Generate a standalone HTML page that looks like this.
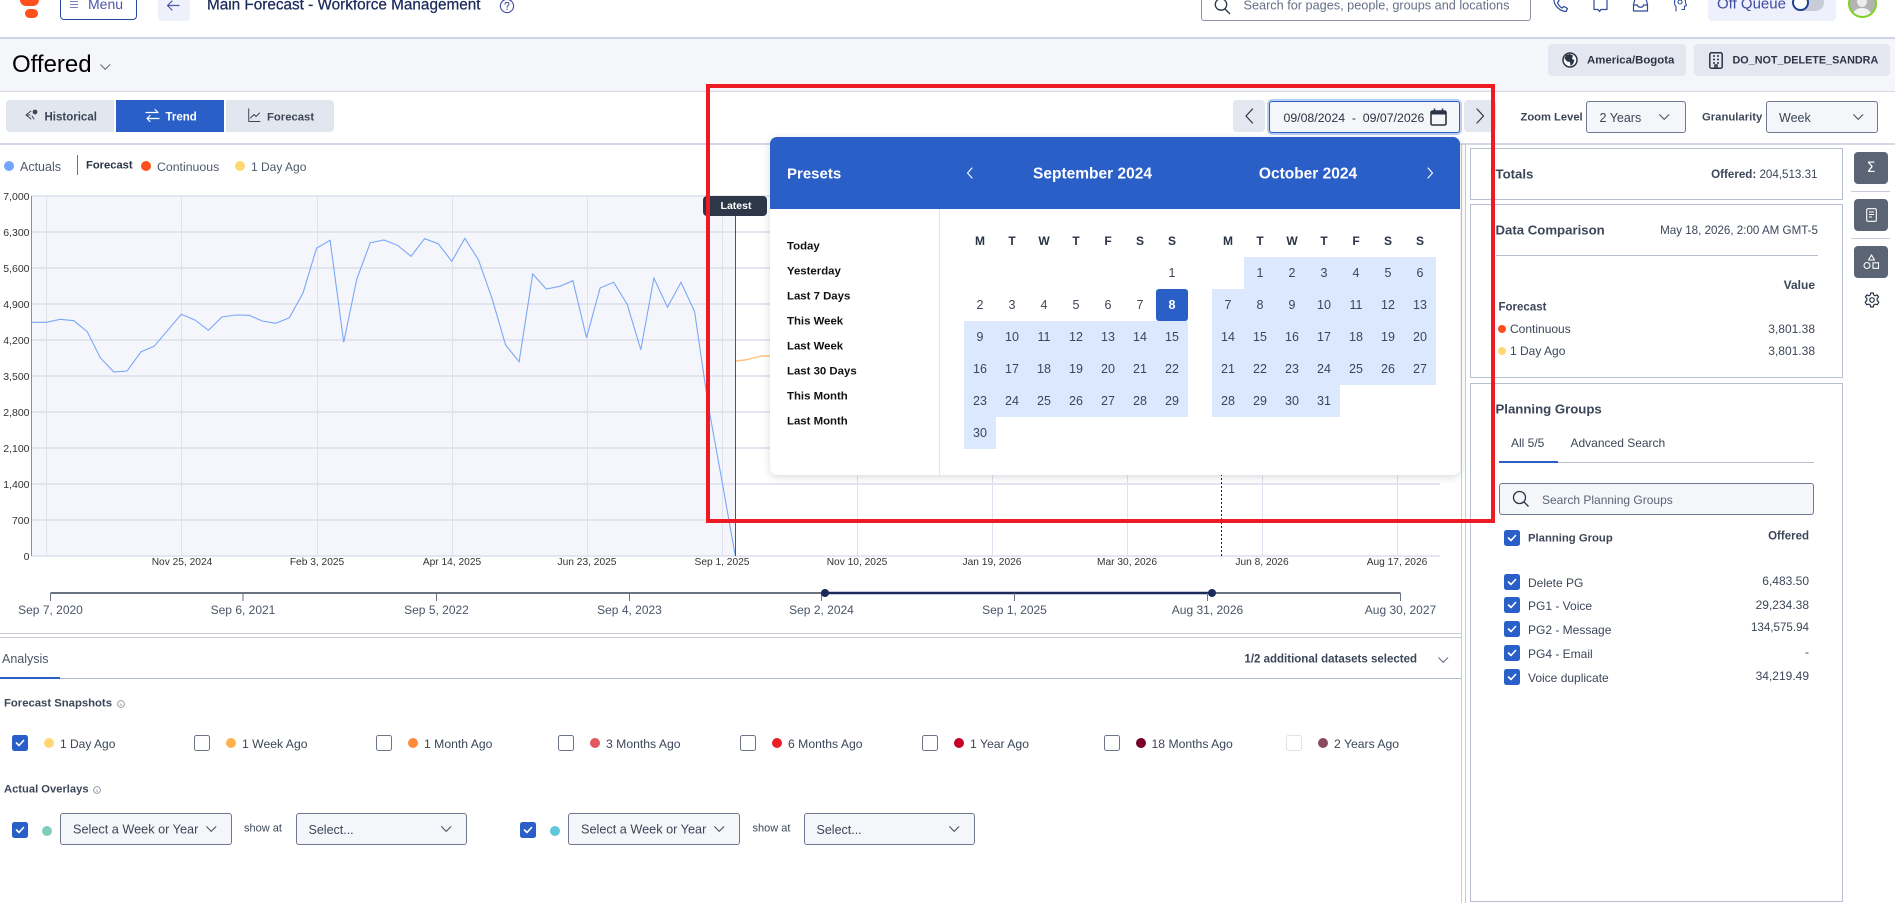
<!DOCTYPE html>
<html lang="en">
<head>
<meta charset="utf-8">
<title>Main Forecast - Workforce Management</title>
<style>
*{box-sizing:border-box}
html,body{margin:0;padding:0;width:1895px;height:903px;overflow:hidden;background:#fff}
body{position:relative;font-family:"Liberation Sans",sans-serif;color:#3c4658}
.t{position:absolute;white-space:nowrap;line-height:1;transform:translateY(-50%);font-size:12px}
.c{transform:translate(-50%,-50%)}
.b{font-weight:bold}
.box{position:absolute}
svg{position:absolute;overflow:visible}
.ic{fill:none;stroke-linecap:round;stroke-linejoin:round}
.sel{position:absolute;background:#f5f6f9;border:1px solid #6f7890;border-radius:3px}
.cb{position:absolute;width:16px;height:16px;border-radius:2.5px;background:#2a5fc8}
.cb svg{left:3px;top:3px}
.ub{position:absolute;width:16px;height:16px;border-radius:2.5px;background:#fff;border:1.5px solid #6b7488}
.dot{position:absolute;width:10px;height:10px;border-radius:50%}
.grid{position:absolute;display:grid;grid-template-columns:repeat(7,32px);grid-auto-rows:32px;font-size:12.5px;color:#3c4658}
.grid div{display:flex;align-items:center;justify-content:center}
.grid .w{font-weight:bold;color:#2b3445;font-size:12px}
.grid .h{background:#dce8fd}
.grid .s{background:#2a5fc8;color:#fff;font-weight:bold;border-radius:3px}
.pre{position:absolute;left:787px;font-weight:bold;font-size:11.4px;line-height:1;color:#111;transform:translateY(-50%);white-space:nowrap}
.x{font-size:10.2px;color:#333}
.y{font-size:10.5px;color:#333}
.tl{font-size:12px;color:#4a5568}
</style>
</head>
<body>

<!-- top header -->
<div class="box" style="left:0;top:37px;width:1895px;height:1.5px;background:#cdd2e6"></div>
<div class="box" style="left:20px;top:-6px;width:19px;height:12px;border-radius:6px;background:#ff4f1f"></div>
<div class="box" style="left:25px;top:9px;width:13px;height:9px;border-radius:4.5px;background:#ff4f1f"></div>

<div class="box" style="left:60px;top:-12px;width:77px;height:32px;border:1px solid #2a4a9f;border-radius:4px;background:#fff"></div>
<svg style="left:70px;top:0" width="10" height="10"><path d="M0 1.5H8M0 4.5H8M0 7.5H8" stroke="#7a82b8" stroke-width="1"/></svg>
<div class="t" style="left:88px;top:4px;font-size:14px;color:#4d57a8">Menu</div>
<div class="box" style="left:158px;top:-12px;width:32px;height:33px;border-radius:4px;background:#eef0fb"></div>
<svg style="left:166px;top:0" width="14" height="12"><path class="ic" d="M13 5.5H1.5M6 1L1.5 5.5L6 10" stroke="#4d57a8" stroke-width="1.2"/></svg>
<div class="t" style="left:207px;top:5px;font-size:15.3px;color:#1b2a5b;-webkit-text-stroke:.25px #1b2a5b">Main Forecast - Workforce Management</div>
<svg style="left:499px;top:-2px" width="16" height="16"><circle cx="8" cy="8" r="6.6" fill="none" stroke="#3f4ca0" stroke-width="1.1"/><path class="ic" d="M6 6.2C6 3.8 10 3.8 10 6.2C10 7.6 8 7.6 8 9.3" stroke="#3f4ca0" stroke-width="1"/><circle cx="8" cy="11.3" r=".7" fill="#3f4ca0"/></svg>

<div class="box" style="left:1201px;top:-12px;width:330px;height:33px;border:1px solid #8d93a8;border-radius:3px;background:#fff"></div>
<svg style="left:1214px;top:-2px" width="18" height="18"><circle cx="7" cy="6.5" r="5.7" fill="none" stroke="#2b3445" stroke-width="1.3"/><path d="M11 11L16 16" stroke="#2b3445" stroke-width="1.3"/></svg>
<div class="t" style="left:1243.5px;top:6px;font-size:12.7px;color:#667086">Search for pages, people, groups and locations</div>

<svg style="left:1552px;top:-4px" width="17" height="17"><path class="ic" d="M2 4C2 9 7 15 14 15.5L15.5 12.5L12 10.5L10 12C8 11 6 8.5 5.5 6.5L7 5L5 1Z" stroke="#2f4a9c" stroke-width="1.2"/></svg>
<svg style="left:1592px;top:-4px" width="17" height="17"><path class="ic" d="M2 1V13.5H6L7.5 15.5L9 13.5H15V1" stroke="#2f4a9c" stroke-width="1.2"/></svg>
<svg style="left:1632px;top:-4px" width="17" height="17"><path class="ic" d="M3.5 1L1.5 8.5V15H15.5V8.5L13.5 1M1.5 9H5.5C6 12 11 12 11.5 9H15.5" stroke="#2f4a9c" stroke-width="1.2"/></svg>
<svg style="left:1672px;top:-4px" width="17" height="17"><circle cx="8" cy="6" r="2" fill="none" stroke="#2f4a9c" stroke-width="1.1"/><path class="ic" d="M2.5 6C2.5 0 13.5 0 13.5 6C13.5 8 15 9 14 10H12.5V13.5H10M4 15V10.5C3 9.5 2.5 8 2.5 6" stroke="#2f4a9c" stroke-width="1.1"/></svg>

<div class="box" style="left:1708px;top:-12px;width:128px;height:33px;border-radius:4px;background:#eef0fb"></div>
<div class="t" style="left:1717px;top:4px;font-size:15px;color:#3f4ca0">Off Queue</div>
<div class="box" style="left:1792px;top:-6px;width:32px;height:17px;border-radius:8.5px;background:#c8ccd6"></div>
<div class="box" style="left:1792px;top:-6px;width:16.5px;height:17px;border-radius:50%;background:#fff;border:2.5px solid #1f3f94"></div>
<div class="box" style="left:1848px;top:-11px;width:29px;height:29px;border-radius:50%;border:2.5px solid #7ed321;background:#b3b3b3;overflow:hidden">
  <div class="box" style="left:3px;top:17px;width:18px;height:14px;border-radius:50%;background:#f3f3f3"></div>
  <div class="box" style="left:7px;top:5px;width:10px;height:11px;border-radius:50%;background:#ececec"></div>
</div>

<!-- offered bar -->
<div class="box" style="left:0;top:38.5px;width:1895px;height:53px;background:#f5f6f9;border-bottom:1.5px solid #d5d8e4"></div>
<div class="t" style="left:12px;top:65px;font-size:24px;color:#000">Offered</div>
<svg style="left:100px;top:64px" width="11" height="7"><path class="ic" d="M.7 .7L5.2 5.4L9.8 .7" stroke="#5a6475" stroke-width="1"/></svg>

<div class="box" style="left:1548px;top:44px;width:138px;height:32px;border-radius:4px;background:#e4e7f0"></div>
<svg style="left:1562px;top:52px" width="16" height="16"><circle cx="8" cy="8" r="7" fill="#fff" stroke="#2b3445" stroke-width="1.5"/><path d="M4 3L8 2L11 3.5L10 7L12.5 8L11 12L8.5 14L8 10L5 9.5L2.5 6.5Z" fill="#2b3445"/></svg>
<div class="t b" style="left:1587px;top:60.5px;color:#2b3445;font-size:11.4px">America/Bogota</div>
<div class="box" style="left:1694px;top:44px;width:196px;height:32px;border-radius:4px;background:#e4e7f0"></div>
<svg style="left:1709px;top:52px" width="14" height="17"><rect x=".8" y=".8" width="12.4" height="15.4" rx="1.5" fill="none" stroke="#2b3445" stroke-width="1.5"/><path d="M4 4H6M8 4H10M4 7.5H6M8 7.5H10M4 11H6M8 11H10M6 16V13H8V16" stroke="#2b3445" stroke-width="1.5" fill="none"/></svg>
<div class="t b" style="left:1732.5px;top:60.5px;color:#2b3445;font-size:10.8px">DO_NOT_DELETE_SANDRA</div>

<!-- tab row -->
<div class="box" style="left:6px;top:100px;width:108px;height:32px;background:#e2e6ee;border-radius:4px 0 0 4px"></div>
<div class="box" style="left:116px;top:100px;width:108px;height:32px;background:#2a5fc8"></div>
<div class="box" style="left:226px;top:100px;width:108px;height:32px;background:#e2e6ee;border-radius:0 4px 4px 0"></div>
<svg style="left:25px;top:108px" width="14" height="14"><path class="ic" d="M6 3L1 7L6 11M1 7H5M9 11L7 8" stroke="#3c4658" stroke-width="1"/><circle cx="10" cy="4" r="2.4" fill="#3c4658"/></svg>
<div class="t b" style="left:44.5px;top:117.5px;color:#3c4658;font-size:11.5px">Historical</div>
<svg style="left:145px;top:108px" width="15" height="15"><path class="ic" d="M1 4.5H13M10 1.5L13 4.5M14 10.5H2M5 7.5L2 10.5L5 13.5" stroke="#fff" stroke-width="1.2"/></svg>
<div class="t b" style="left:165.5px;top:117.5px;color:#fff;font-size:11.5px">Trend</div>
<svg style="left:248px;top:108px" width="13" height="15"><path class="ic" d="M.7 .7V13.5H12M2.5 10L6 6.5L8 8.5L11.5 5" stroke="#3c4658" stroke-width="1"/></svg>
<div class="t b" style="left:267px;top:117.5px;color:#3c4658;font-size:11.3px">Forecast</div>
<div class="box" style="left:0;top:143px;width:1895px;height:1.5px;background:#d5d8e4"></div>

<!-- legend -->
<div class="dot" style="left:4px;top:161px;background:#72a5fb"></div>
<div class="t" style="left:20px;top:167px;font-size:12.5px;color:#4f5a6c">Actuals</div>
<div class="box" style="left:77px;top:155px;width:1px;height:20px;background:#6b7488"></div>
<div class="t b" style="left:86px;top:166px;color:#2b3445;font-size:11.2px">Forecast</div>
<div class="dot" style="left:141px;top:161px;background:#ff4f1f"></div>
<div class="t" style="left:157px;top:167px;font-size:12.3px;color:#4f5a6c">Continuous</div>
<div class="dot" style="left:235px;top:161px;background:#ffd873"></div>
<div class="t" style="left:251px;top:167px;font-size:12px;color:#4f5a6c">1 Day Ago</div>

<!-- chart -->
<svg style="left:0;top:0" width="1895" height="903">
  <rect x="31.5" y="196" width="704" height="360" fill="#f5f6fb"/>
  <g stroke="#dcdfea" stroke-width="1.4" fill="none">
    <path d="M31 196H1440M31 232H1440M31 268H1440M31 304H1440M31 340H1440M31 376H1440M31 412H1440M31 448H1440M31 484H1440M31 520H1440M31 556H1440"/>
  </g>
  <g stroke="#dfe2ee" stroke-width="1" fill="none">
    <path d="M46.5 196V556M181.5 196V556M317.5 196V556M452.5 196V556M587.5 196V556M722.5 196V556M857.5 196V556M992.5 196V556M1127.5 196V556M1262.5 196V556M1397.5 196V556"/>
  </g>
  <path d="M31.5 196V556" stroke="#8a8f9c" stroke-width="1"/>
  <path d="M1221.5 470V556" stroke="#222" stroke-width="1" stroke-dasharray="2 2"/>
  <polyline fill="none" stroke="#7aa7f7" stroke-width="1.1" points="31.5,322.3 46.5,322.3 60.1,319.3 73.7,320.7 87.3,331.7 100.3,357.7 113.9,372 127,371 141.1,351.7 154.1,346.3 167.7,330.3 181.3,314.3 194.9,320 208.4,330.3 222,317 235.6,315 249.2,315.3 262.2,321 275.8,323.3 289.4,317.7 303,293 316.5,248.3 330.1,240.3 343.7,342.3 356.8,279 370.3,242.7 383.9,240 397.5,245.3 411,256.3 424.6,238.7 438.2,243.7 451.8,261.3 464.9,238.3 478.4,259.7 492,298.3 505.6,345 519.1,361.7 532.7,274 546.3,289 559.9,286.3 572.9,280.7 586.5,337.7 600.1,288 613.7,282.3 627.2,304.3 640.8,349.7 653.9,278 667.5,307.3 681,282.3 694.6,311.7 708.2,405 721.8,480 735.3,556"/>
  <polyline fill="none" stroke="#ffc27a" stroke-width="1.4" points="735.5,361 745,360 755,357.5 762,356 772,356"/>
  <path d="M735.5 200V556" stroke="#4b5563" stroke-width="1"/>
  <!-- timeline -->
  <path d="M50.5 593H1400.5" stroke="#6b7280" stroke-width="2"/>
  <path d="M825 593H1212" stroke="#1b2a5b" stroke-width="2.4"/>
  <path d="M50.5 593V601M243 593V601M436.5 593V601M629.5 593V601M821.5 593V601M1014.5 593V601M1207.5 593V601M1400.5 593V601" stroke="#6b7280" stroke-width="1"/>
  <circle cx="825" cy="593" r="4" fill="#1b2a5b"/>
  <circle cx="1212" cy="593" r="4" fill="#1b2a5b"/>
</svg>

<div class="t y" style="right:1865.5px;top:196.5px">7,000</div>
<div class="t y" style="right:1865.5px;top:232.5px">6,300</div>
<div class="t y" style="right:1865.5px;top:268.5px">5,600</div>
<div class="t y" style="right:1865.5px;top:304.5px">4,900</div>
<div class="t y" style="right:1865.5px;top:340.5px">4,200</div>
<div class="t y" style="right:1865.5px;top:376.5px">3,500</div>
<div class="t y" style="right:1865.5px;top:412.5px">2,800</div>
<div class="t y" style="right:1865.5px;top:448.5px">2,100</div>
<div class="t y" style="right:1865.5px;top:484.5px">1,400</div>
<div class="t y" style="right:1865.5px;top:520.5px">700</div>
<div class="t y" style="right:1865.5px;top:556.5px">0</div>

<div class="t c x" style="left:182px;top:563px">Nov 25, 2024</div>
<div class="t c x" style="left:317px;top:563px">Feb 3, 2025</div>
<div class="t c x" style="left:452px;top:563px">Apr 14, 2025</div>
<div class="t c x" style="left:587px;top:563px">Jun 23, 2025</div>
<div class="t c x" style="left:722px;top:563px">Sep 1, 2025</div>
<div class="t c x" style="left:857px;top:563px">Nov 10, 2025</div>
<div class="t c x" style="left:992px;top:563px">Jan 19, 2026</div>
<div class="t c x" style="left:1127px;top:563px">Mar 30, 2026</div>
<div class="t c x" style="left:1262px;top:563px">Jun 8, 2026</div>
<div class="t c x" style="left:1397px;top:563px">Aug 17, 2026</div>

<div class="t c tl" style="left:50.5px;top:610px">Sep 7, 2020</div>
<div class="t c tl" style="left:243px;top:610px">Sep 6, 2021</div>
<div class="t c tl" style="left:436.5px;top:610px">Sep 5, 2022</div>
<div class="t c tl" style="left:629.5px;top:610px">Sep 4, 2023</div>
<div class="t c tl" style="left:821.5px;top:610px">Sep 2, 2024</div>
<div class="t c tl" style="left:1014.5px;top:610px">Sep 1, 2025</div>
<div class="t c tl" style="left:1207.5px;top:610px">Aug 31, 2026</div>
<div class="t c tl" style="left:1400.5px;top:610px">Aug 30, 2027</div>

<!-- latest tag -->
<div class="box" style="left:703px;top:196px;width:64px;height:20px;background:#2e3748;border-radius:4px"></div>
<div class="t c b" style="left:736px;top:205.5px;color:#fff;font-size:10.5px">Latest</div>

<!-- analysis -->
<div class="box" style="left:0;top:633px;width:1461px;height:1px;background:#c8ccd8"></div>
<div class="box" style="left:0;top:637px;width:1461px;height:1px;background:#c8ccd8"></div>
<div class="t" style="left:2px;top:659px;font-size:12.5px;color:#4a5568">Analysis</div>
<div class="box" style="left:0;top:678px;width:1461px;height:1px;background:#b0b8d0"></div>
<div class="box" style="left:0;top:677px;width:60px;height:2px;background:#2a5fc8"></div>
<div class="t b" style="right:478px;top:660px;color:#3c4658;font-size:11.5px">1/2 additional datasets selected</div>
<svg style="left:1438px;top:657px" width="11" height="7"><path class="ic" d="M.7 .7L5.2 5.4L9.8 .7" stroke="#5a6475" stroke-width="1"/></svg>

<div class="t b" style="left:4px;top:704px;color:#3c4658;font-size:11.3px">Forecast Snapshots</div>
<svg style="left:117px;top:700px" width="8" height="8"><circle cx="4" cy="4" r="3.4" fill="none" stroke="#7a8394" stroke-width=".8"/><path d="M4 3.5V6" stroke="#7a8394" stroke-width=".8"/></svg>

<div class="cb" style="left:12px;top:735px"><svg width="10" height="10"><path class="ic" d="M1.5 5L4 7.5L8.5 2.5" stroke="#fff" stroke-width="1.6"/></svg></div>
<div class="dot" style="left:44px;top:738px;background:#ffd873"></div>
<div class="t" style="left:60px;top:744px;font-size:12px">1 Day Ago</div>
<div class="ub" style="left:194px;top:735px"></div>
<div class="dot" style="left:225.5px;top:738px;background:#ffb14e"></div>
<div class="t" style="left:242px;top:744px;font-size:12.2px">1 Week Ago</div>
<div class="ub" style="left:376px;top:735px"></div>
<div class="dot" style="left:408px;top:738px;background:#ff8a3c"></div>
<div class="t" style="left:424px;top:744px;font-size:12.2px">1 Month Ago</div>
<div class="ub" style="left:558px;top:735px"></div>
<div class="dot" style="left:590px;top:738px;background:#e0595f"></div>
<div class="t" style="left:606px;top:744px;font-size:12.2px">3 Months Ago</div>
<div class="ub" style="left:740px;top:735px"></div>
<div class="dot" style="left:772px;top:738px;background:#ea1f25"></div>
<div class="t" style="left:788px;top:744px;font-size:12.2px">6 Months Ago</div>
<div class="ub" style="left:922px;top:735px"></div>
<div class="dot" style="left:954px;top:738px;background:#c70025"></div>
<div class="t" style="left:970px;top:744px;font-size:12.2px">1 Year Ago</div>
<div class="ub" style="left:1104px;top:735px"></div>
<div class="dot" style="left:1135.5px;top:738px;background:#7a0026"></div>
<div class="t" style="left:1151.5px;top:744px;font-size:12.2px">18 Months Ago</div>
<div class="ub" style="left:1286px;top:735px;border-color:#dfe2e8"></div>
<div class="dot" style="left:1318px;top:738px;background:#8a4a60"></div>
<div class="t" style="left:1334px;top:744px;font-size:12.2px">2 Years Ago</div>

<div class="t b" style="left:4px;top:789.5px;color:#3c4658;font-size:11.2px">Actual Overlays</div>
<svg style="left:93px;top:786px" width="8" height="8"><circle cx="4" cy="4" r="3.4" fill="none" stroke="#7a8394" stroke-width=".8"/><path d="M4 3.5V6" stroke="#7a8394" stroke-width=".8"/></svg>

<div class="cb" style="left:12px;top:822px"><svg width="10" height="10"><path class="ic" d="M1.5 5L4 7.5L8.5 2.5" stroke="#fff" stroke-width="1.6"/></svg></div>
<div class="dot" style="left:42px;top:826px;background:#7fcdbb"></div>
<div class="sel" style="left:60px;top:813px;width:172px;height:32px"></div>
<div class="t" style="left:73px;top:829.5px;font-size:12.7px">Select a Week or Year</div>
<svg style="left:206px;top:826px" width="11" height="7"><path class="ic" d="M.7 .7L5.2 5.4L9.8 .7" stroke="#4a5568" stroke-width="1.1"/></svg>
<div class="t" style="left:244px;top:829px;font-size:11px">show at</div>
<div class="sel" style="left:295.5px;top:813px;width:171px;height:32px"></div>
<div class="t" style="left:308.5px;top:829.5px;font-size:12.5px">Select...</div>
<svg style="left:441px;top:826px" width="11" height="7"><path class="ic" d="M.7 .7L5.2 5.4L9.8 .7" stroke="#4a5568" stroke-width="1.1"/></svg>

<div class="cb" style="left:520px;top:822px"><svg width="10" height="10"><path class="ic" d="M1.5 5L4 7.5L8.5 2.5" stroke="#fff" stroke-width="1.6"/></svg></div>
<div class="dot" style="left:550px;top:826px;background:#5fc8d8"></div>
<div class="sel" style="left:568px;top:813px;width:172px;height:32px"></div>
<div class="t" style="left:581px;top:829.5px;font-size:12.7px">Select a Week or Year</div>
<svg style="left:714px;top:826px" width="11" height="7"><path class="ic" d="M.7 .7L5.2 5.4L9.8 .7" stroke="#4a5568" stroke-width="1.1"/></svg>
<div class="t" style="left:752.5px;top:829px;font-size:11px">show at</div>
<div class="sel" style="left:803.5px;top:813px;width:171px;height:32px"></div>
<div class="t" style="left:816.5px;top:829.5px;font-size:12.5px">Select...</div>
<svg style="left:949px;top:826px" width="11" height="7"><path class="ic" d="M.7 .7L5.2 5.4L9.8 .7" stroke="#4a5568" stroke-width="1.1"/></svg>

<!-- date controls -->
<div class="box" style="left:1233px;top:100px;width:32px;height:32px;background:#e4e7f0;border-radius:4px"></div>
<svg style="left:1245px;top:108px" width="9" height="16"><path class="ic" d="M7.5 1L1 8L7.5 15" stroke="#2b3445" stroke-width="1.2"/></svg>
<div class="box" style="left:1269px;top:101px;width:191px;height:32px;background:#f5f6f9;border:1px solid #2a5fc8;border-radius:3px;box-shadow:0 0 0 2px #bcd0f5"></div>
<div class="t" style="left:1283.5px;top:117.5px;font-size:12.3px;color:#2b3445">09/08/2024&nbsp; - &nbsp;09/07/2026</div>
<svg style="left:1430px;top:108px" width="17" height="18"><rect x="1" y="3" width="15" height="14" rx="1.5" fill="none" stroke="#2b3445" stroke-width="1.6"/><path d="M1 6.5H16V3H1Z" fill="#2b3445"/><path d="M4.5 .5V3M12.5 .5V3" stroke="#2b3445" stroke-width="1.6"/></svg>
<div class="box" style="left:1464px;top:100px;width:32px;height:32px;background:#e4e7f0;border-radius:4px"></div>
<svg style="left:1476px;top:108px" width="9" height="16"><path class="ic" d="M1 1L7.5 8L1 15" stroke="#2b3445" stroke-width="1.2"/></svg>

<div class="t b" style="left:1520.5px;top:117.5px;color:#3c4658;font-size:11.2px">Zoom Level</div>
<div class="sel" style="left:1586px;top:101px;width:100px;height:32px"></div>
<div class="t" style="left:1599.5px;top:117.5px;font-size:12.5px">2 Years</div>
<svg style="left:1659px;top:114px" width="11" height="7"><path class="ic" d="M.7 .7L5.2 5.4L9.8 .7" stroke="#4a5568" stroke-width="1.1"/></svg>
<div class="t b" style="left:1702px;top:117.5px;color:#3c4658;font-size:11.3px">Granularity</div>
<div class="sel" style="left:1766px;top:101px;width:112px;height:32px"></div>
<div class="t" style="left:1779px;top:117.5px;font-size:12.5px">Week</div>
<svg style="left:1853px;top:114px" width="11" height="7"><path class="ic" d="M.7 .7L5.2 5.4L9.8 .7" stroke="#4a5568" stroke-width="1.1"/></svg>

<!-- right panel -->
<div class="box" style="left:1461px;top:144px;width:1px;height:759px;background:#c8ccd8"></div>
<div class="box" style="left:1465px;top:144px;width:1px;height:759px;background:#c8ccd8"></div>

<div class="box" style="left:1470px;top:148px;width:373px;height:52px;border:1px solid #b8bfd0"></div>
<div class="t b" style="left:1495.5px;top:174px;font-size:13.2px;color:#3c4658">Totals</div>
<div class="t" style="right:77.5px;top:174.5px;font-size:11.6px;color:#3c4658"><b>Offered:</b> 204,513.31</div>

<div class="box" style="left:1470px;top:204px;width:373px;height:174px;border:1px solid #b8bfd0"></div>
<div class="t b" style="left:1495.5px;top:230px;font-size:13.2px;color:#3c4658">Data Comparison</div>
<div class="t" style="right:77px;top:230.5px;font-size:11.6px">May 18, 2026, 2:00 AM GMT-5</div>
<div class="box" style="left:1495.5px;top:255px;width:322.5px;height:1px;background:#b8bfd0"></div>
<div class="t b" style="right:80px;top:284.5px;color:#3c4658">Value</div>
<div class="t b" style="left:1498.5px;top:307.5px;color:#3c4658;font-size:11.5px">Forecast</div>
<div class="box" style="left:1498px;top:325px;width:8px;height:8px;border-radius:50%;background:#ff4f1f"></div>
<div class="t" style="left:1510px;top:328.5px;font-size:12px">Continuous</div>
<div class="t" style="right:80px;top:328.5px;font-size:12px">3,801.38</div>
<div class="box" style="left:1498px;top:347px;width:8px;height:8px;border-radius:50%;background:#ffd873"></div>
<div class="t" style="left:1510px;top:350.5px;font-size:12px">1 Day Ago</div>
<div class="t" style="right:80px;top:350.5px;font-size:12px">3,801.38</div>

<div class="box" style="left:1470px;top:383px;width:373px;height:519px;border:1px solid #b8bfd0"></div>
<div class="t b" style="left:1495.5px;top:409px;font-size:13.2px;color:#3c4658">Planning Groups</div>
<div class="t" style="left:1511px;top:443px;font-size:12px">All 5/5</div>
<div class="t" style="left:1570.5px;top:443px;font-size:12px">Advanced Search</div>
<div class="box" style="left:1499px;top:462px;width:315px;height:1px;background:#b8bfd0"></div>
<div class="box" style="left:1499px;top:461px;width:59px;height:2px;background:#2a5fc8"></div>
<div class="sel" style="left:1499px;top:483px;width:315px;height:32px"></div>
<svg style="left:1512px;top:490px" width="18" height="18"><circle cx="7.5" cy="7.5" r="6" fill="none" stroke="#2b3445" stroke-width="1.3"/><path d="M12 12L16.5 16.5" stroke="#2b3445" stroke-width="1.3"/></svg>
<div class="t" style="left:1542px;top:499.5px;font-size:12px;color:#5a6475">Search Planning Groups</div>

<div class="cb" style="left:1504px;top:530px"><svg width="10" height="10"><path class="ic" d="M1.5 5L4 7.5L8.5 2.5" stroke="#fff" stroke-width="1.6"/></svg></div>
<div class="t b" style="left:1528px;top:538.5px;color:#3c4658;font-size:11.3px">Planning Group</div>
<div class="t b" style="right:86px;top:536.5px;color:#3c4658;font-size:11.5px">Offered</div>

<div class="cb" style="left:1504px;top:574px"><svg width="10" height="10"><path class="ic" d="M1.5 5L4 7.5L8.5 2.5" stroke="#fff" stroke-width="1.6"/></svg></div>
<div class="t" style="left:1528px;top:582.5px;font-size:12px">Delete PG</div>
<div class="t" style="right:86px;top:580.5px;font-size:12px">6,483.50</div>
<div class="cb" style="left:1504px;top:597px"><svg width="10" height="10"><path class="ic" d="M1.5 5L4 7.5L8.5 2.5" stroke="#fff" stroke-width="1.6"/></svg></div>
<div class="t" style="left:1528px;top:605.5px;font-size:12px">PG1 - Voice</div>
<div class="t" style="right:86px;top:604.5px;font-size:12px">29,234.38</div>
<div class="cb" style="left:1504px;top:621px"><svg width="10" height="10"><path class="ic" d="M1.5 5L4 7.5L8.5 2.5" stroke="#fff" stroke-width="1.6"/></svg></div>
<div class="t" style="left:1528px;top:629.5px;font-size:12px">PG2 - Message</div>
<div class="t" style="right:86px;top:627.5px;font-size:11.6px">134,575.94</div>
<div class="cb" style="left:1504px;top:645px"><svg width="10" height="10"><path class="ic" d="M1.5 5L4 7.5L8.5 2.5" stroke="#fff" stroke-width="1.6"/></svg></div>
<div class="t" style="left:1528px;top:653.5px;font-size:12px">PG4 - Email</div>
<div class="t" style="right:86px;top:652px;font-size:12px">-</div>
<div class="cb" style="left:1504px;top:669px"><svg width="10" height="10"><path class="ic" d="M1.5 5L4 7.5L8.5 2.5" stroke="#fff" stroke-width="1.6"/></svg></div>
<div class="t" style="left:1528px;top:677.5px;font-size:12px">Voice duplicate</div>
<div class="t" style="right:86px;top:675.5px;font-size:12px">34,219.49</div>

<!-- side toolbar -->
<div class="box" style="left:1854px;top:152px;width:34px;height:32px;background:#5b6474;border-radius:4px"></div>
<div class="t c" style="left:1871px;top:168px;color:#fff;font-size:14px;font-family:'DejaVu Sans',sans-serif">Σ</div>
<div class="box" style="left:1851px;top:191px;width:39px;height:1px;background:#c8ccd8"></div>
<div class="box" style="left:1854px;top:199px;width:34px;height:32px;background:#5b6474;border-radius:4px"></div>
<svg style="left:1865.5px;top:208px" width="11" height="14"><rect x=".7" y=".7" width="9.6" height="12.6" rx="1.2" fill="none" stroke="#fff" stroke-width="1.1"/><path d="M3 4H8M3 6.5H8M3 9H6" stroke="#fff" stroke-width="1"/></svg>
<div class="box" style="left:1851px;top:238px;width:39px;height:1px;background:#c8ccd8"></div>
<div class="box" style="left:1854px;top:246px;width:34px;height:32px;background:#5b6474;border-radius:4px"></div>
<svg style="left:1863px;top:254px" width="17" height="16"><path class="ic" d="M8.5 1L11.5 6H5.5Z" fill="none" stroke="#fff" stroke-width="1.1"/><circle cx="4" cy="11.5" r="3" fill="none" stroke="#fff" stroke-width="1.1"/><rect x="10" y="8.8" width="5.5" height="5.5" fill="none" stroke="#fff" stroke-width="1.1"/></svg>
<svg style="left:1864px;top:292px" width="16" height="16" viewBox="0 0 16 16"><circle cx="8" cy="8" r="2.3" fill="none" stroke="#2b3445" stroke-width="1.2"/><path class="ic" d="M6.7 1H9.3L9.7 3L11.3 3.8L13.1 2.9L14.6 5L13.2 6.4V8.6L14.8 10.2L13.3 12.7L11.3 12.2L9.7 13L9.3 15H6.7L6.3 13L4.7 12.2L2.7 12.7L1.2 10.2L2.8 8.6V6.4L1.4 5L2.9 2.9L4.7 3.8L6.3 3Z" fill="none" stroke="#2b3445" stroke-width="1.2"/></svg>

<!-- date popup -->
<div class="box" style="left:770px;top:137px;width:690px;height:338px;background:#fff;border-radius:7px;box-shadow:0 2px 8px rgba(40,50,80,.18)"></div>
<div class="box" style="left:770px;top:137px;width:690px;height:72px;background:#2a5fc8;border-radius:7px 7px 0 0"></div>
<div class="box" style="left:939px;top:209px;width:1px;height:266px;background:#e2e5ec"></div>
<div class="t b" style="left:787px;top:174px;color:#fff;font-size:15px">Presets</div>
<svg style="left:966px;top:167px" width="8" height="12"><path class="ic" d="M6 1L1.5 6L6 11" stroke="#fff" stroke-width="1.1"/></svg>
<div class="t c b" style="left:1092.5px;top:173.5px;color:#fff;font-size:15.5px">September 2024</div>
<div class="t c b" style="left:1308px;top:173.5px;color:#fff;font-size:15.5px">October 2024</div>
<svg style="left:1426px;top:167px" width="8" height="12"><path class="ic" d="M2 1L6.5 6L2 11" stroke="#fff" stroke-width="1.1"/></svg>

<div class="pre" style="top:246.5px">Today</div>
<div class="pre" style="top:271.5px">Yesterday</div>
<div class="pre" style="top:296.5px">Last 7 Days</div>
<div class="pre" style="top:321.7px">This Week</div>
<div class="pre" style="top:346.5px">Last Week</div>
<div class="pre" style="top:371.5px">Last 30 Days</div>
<div class="pre" style="top:396.7px">This Month</div>
<div class="pre" style="top:421.7px">Last Month</div>

<div class="grid" style="left:964px;top:225px">
  <div class="w">M</div><div class="w">T</div><div class="w">W</div><div class="w">T</div><div class="w">F</div><div class="w">S</div><div class="w">S</div>
  <div></div><div></div><div></div><div></div><div></div><div></div><div>1</div>
  <div>2</div><div>3</div><div>4</div><div>5</div><div>6</div><div>7</div><div class="s">8</div>
  <div class="h">9</div><div class="h">10</div><div class="h">11</div><div class="h">12</div><div class="h">13</div><div class="h">14</div><div class="h">15</div>
  <div class="h">16</div><div class="h">17</div><div class="h">18</div><div class="h">19</div><div class="h">20</div><div class="h">21</div><div class="h">22</div>
  <div class="h">23</div><div class="h">24</div><div class="h">25</div><div class="h">26</div><div class="h">27</div><div class="h">28</div><div class="h">29</div>
  <div class="h">30</div>
</div>
<div class="grid" style="left:1212px;top:225px">
  <div class="w">M</div><div class="w">T</div><div class="w">W</div><div class="w">T</div><div class="w">F</div><div class="w">S</div><div class="w">S</div>
  <div></div><div class="h">1</div><div class="h">2</div><div class="h">3</div><div class="h">4</div><div class="h">5</div><div class="h">6</div>
  <div class="h">7</div><div class="h">8</div><div class="h">9</div><div class="h">10</div><div class="h">11</div><div class="h">12</div><div class="h">13</div>
  <div class="h">14</div><div class="h">15</div><div class="h">16</div><div class="h">17</div><div class="h">18</div><div class="h">19</div><div class="h">20</div>
  <div class="h">21</div><div class="h">22</div><div class="h">23</div><div class="h">24</div><div class="h">25</div><div class="h">26</div><div class="h">27</div>
  <div class="h">28</div><div class="h">29</div><div class="h">30</div><div class="h">31</div>
</div>

<!-- red annotation rectangle -->
<div class="box" style="left:706px;top:84px;width:789px;height:439px;border:4px solid #ed1c24"></div>

</body>
</html>
